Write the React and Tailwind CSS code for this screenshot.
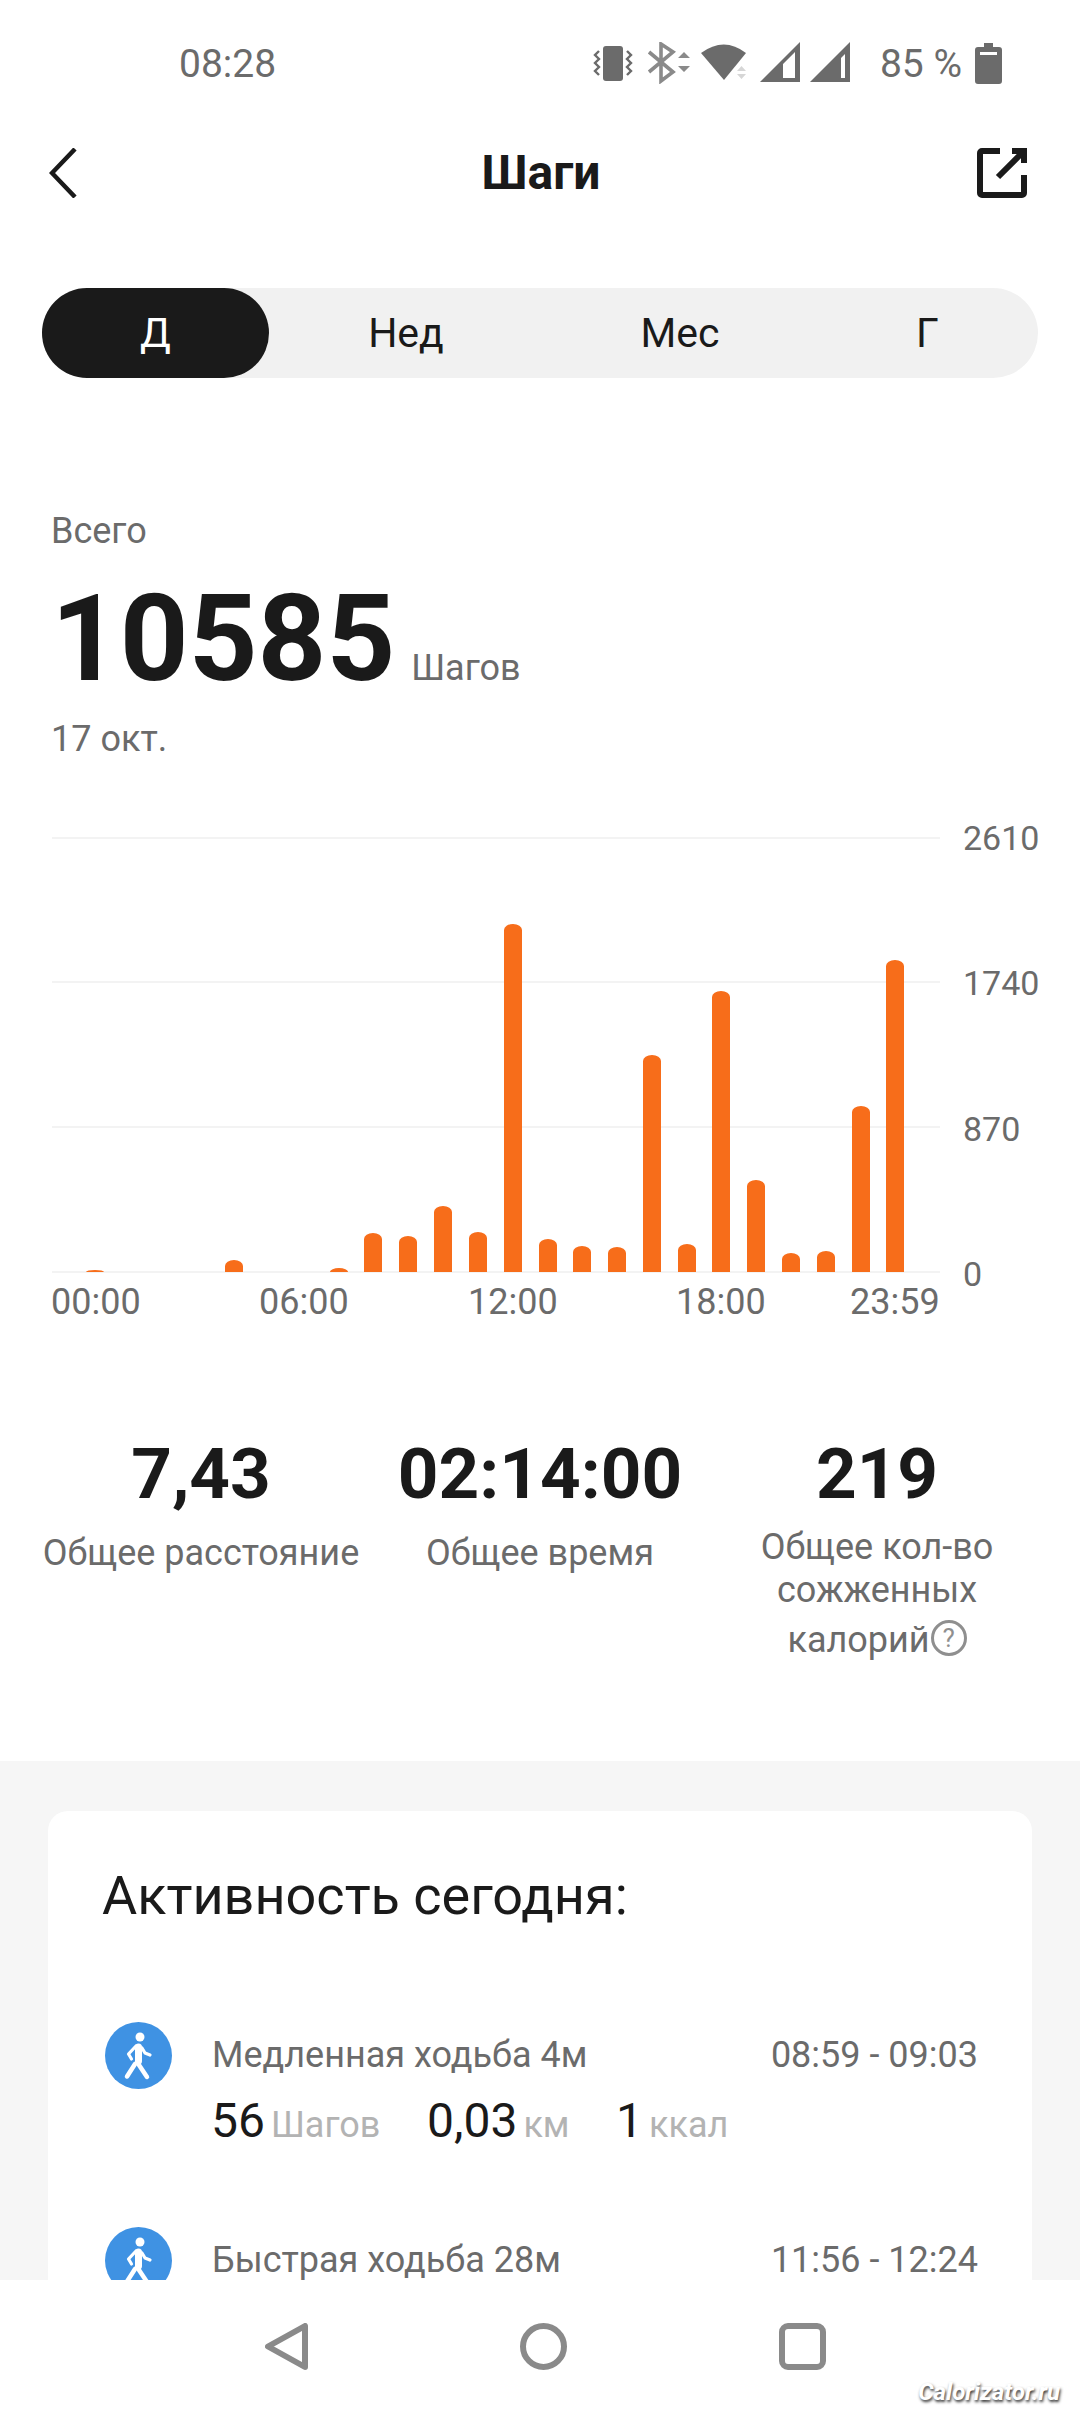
import React from 'react';

const bars = [
  [95, 1270], [234, 1260], [339, 1268], [373, 1233], [408, 1236], [443, 1206], [478, 1232],
  [513, 924], [548, 1239], [582, 1246], [617, 1247], [652, 1055], [687, 1244], [721, 991],
  [756, 1180], [791, 1253], [826, 1251], [861, 1106], [895, 960],
];

const StatusIcons = () => (
  <svg width="257" height="42" viewBox="0 0 257 42" fill="#6b6b6b">
    <rect x="10" y="4" width="20" height="35" rx="3" />
    <path d="M6 9L2 13l4 4-4 4 4 4-4 4 4 4M34 9l4 4-4 4 4 4-4 4 4 4-4 4" fill="none" stroke="#6b6b6b" strokeWidth="2.4" />
    <path d="M56 10l24 20-12 9V2l12 8-24 20" fill="none" stroke="#8a8a8a" strokeWidth="3.6" />
    <path d="M85 16l6-6 6 6zM85 24l6 6 6-6z" fill="#8a8a8a" />
    <path d="M108 11Q131-6 153 11L131 38z" />
    <path d="M144 29l4.500-5 4.500 5zM144 32l4.500 5 4.500-5z" fill="#d6d6d6" />
    <path fillRule="evenodd" d="M167 40L207 0v40zM190 36h12V10l-12 12z" />
    <path fillRule="evenodd" d="M217 40L257 0v40zM248 36h4V12l-4 4z" />
  </svg>
);

const Walker = () => (
  <svg viewBox="0 0 67 67" className="w-[67px] h-[67px] shrink-0" fill="none" stroke="#fff" strokeLinecap="round" strokeLinejoin="round">
    <circle cx="33.500" cy="33.500" r="33.500" fill="#3f92e3" stroke="none" />
    <circle cx="35" cy="15" r="4.500" fill="#fff" stroke="none" />
    <path d="M33.500 25v14" strokeWidth="7" />
    <path d="M32 40l10 15" strokeWidth="4.500" />
    <path d="M30 42l-8 12.500" strokeWidth="4.500" />
    <path d="M31 24l-7.500 8 3 5" strokeWidth="3.200" />
    <path d="M37 26l3 5 5 2" strokeWidth="3.200" />
  </svg>
);

const Stat = ({ value, label, className }) => (
  <div className={`flex flex-col items-center ${className}`}>
    <div className="text-[71px] leading-[90px] font-bold text-[#1a1a1a]">{value}</div>
    <div className="mt-[10px] text-[36px] leading-[48px] text-[#6b6b6b] text-center">{label}</div>
  </div>
);

const Metric = ({ value, unit, className }) => (
  <div className={`flex items-baseline gap-[6px] ${className}`}>
    <span className="text-[48px] leading-[56px] text-[#1a1a1a]">{value}</span>
    <span className="text-[36px] text-[#b3b3b3]">{unit}</span>
  </div>
);

export default function App() {
  return (
    <div className="w-[1080px] h-[2412px] flex flex-col overflow-hidden bg-white font-['Roboto',sans-serif] relative">
      <div className="flex-1 overflow-hidden">
        <div className="h-[126px] pl-[179px] pr-[78px] flex items-center justify-between text-[#6b6b6b]">
          <span className="mt-[2px] text-[39px]">08:28</span>
          <div className="flex items-center">
            <StatusIcons />
            <span className="mt-[2px] ml-[30px] text-[39px]">85 %</span>
            <svg width="27" height="41" viewBox="0 0 27 41" fill="#6b6b6b" className="ml-[13px]">
              <path fillRule="evenodd" d="M9 0h9v4h6a3 3 0 013 3v31a3 3 0 01-3 3H3a3 3 0 01-3-3V7a3 3 0 013-3h6zM5 9v3h17V9z" />
            </svg>
          </div>
        </div>

        <div className="h-[94px] pl-[49px] pr-[53px] grid grid-cols-[1fr_auto_1fr] items-center">
          <svg width="28" height="50" viewBox="0 0 28 50" fill="none" stroke="#1a1a1a" strokeWidth="4.500">
            <path d="M26 1L3 25l23 24" />
          </svg>
          <span className="ml-[6px] text-[48px] font-bold text-[#1a1a1a]">Шаги</span>
          <svg width="50" height="50" viewBox="0 0 50 50" fill="none" stroke="#1a1a1a" strokeWidth="6" className="justify-self-end">
            <path d="M23 3H5a2 2 0 00-2 2v40a2 2 0 002 2h40a2 2 0 002-2V27M21 29L47 3M35 3h12v12" />
          </svg>
        </div>

        <div className="mt-[68px] mx-[42px] h-[90px] rounded-full bg-[#f1f1f1] grid grid-cols-[227px_274px_274px_1fr] text-[41px] text-[#1a1a1a]">
          <div className="pt-[2px] rounded-full bg-[#1a1a1a] text-white flex items-center justify-center">Д</div>
          <div className="pt-[2px] flex items-center justify-center">Нед</div>
          <div className="pt-[2px] flex items-center justify-center">Мес</div>
          <div className="pt-[2px] flex items-center justify-center">Г</div>
        </div>

        <div className="mt-[130px] pl-[51px] pr-[52px]">
          <div className="text-[36px] leading-[46px] text-[#6b6b6b]">Всего</div>
          <div className="flex items-baseline mt-[20px]">
            <span className="text-[120px] leading-[130px] font-bold text-[#1a1a1a]">10585</span>
            <span className="ml-[16px] text-[36px] text-[#6b6b6b]">Шагов</span>
          </div>
          <div className="mt-[12px] text-[36px] leading-[46px] text-[#6b6b6b]">17 окт.</div>
        </div>

        <div className="mt-[75px] pl-[52px] w-full">
          <div className="flex">
            <svg width="888" height="436" viewBox="52 837 888 436" className="block">
              {[838, 982, 1127, 1272].map((y) => (
                <line key={y} x1="52" x2="940" y1={y} y2={y} stroke="#f3f3f3" strokeWidth="2" />
              ))}
              {bars.map(([x, top]) => {
                const ry = Math.min(6, 1272 - top);
                return <path key={x} d={`M${x - 9} 1272V${top + ry}a9 ${ry} 0 0118 0V1272z`} fill="#f76d1a" />;
              })}
            </svg>
            <div className="ml-[23px] h-[476px] -mt-[19px] -mb-[21px] flex flex-col justify-between text-[34px] leading-[40px] text-[#6b6b6b]">
              <span>2610</span>
              <span>1740</span>
              <span>870</span>
              <span>0</span>
            </div>
          </div>
          <div className="mt-[7px] -ml-[1px] flex text-[36px] leading-[44px] text-[#6b6b6b] text-center">
            <span className="w-[88px]">00:00</span>
            <span className="ml-[120px] w-[88px]">06:00</span>
            <span className="ml-[121px] w-[88px]">12:00</span>
            <span className="ml-[120px] w-[88px]">18:00</span>
            <span className="ml-[86px] w-[88px]">23:59</span>
          </div>
        </div>

        <div className="mt-[105px] h-[332px] pl-[42px] flex items-start">
          <Stat value="7,43" label="Общее расстояние" className="w-[318px]" />
          <Stat value="02:14:00" label="Общее время" className="w-[360px]" />
          <div className="w-[314px] flex flex-col items-center">
            <div className="text-[71px] leading-[90px] font-bold text-[#1a1a1a]">219</div>
            <div className="mt-[7px] text-[36px] leading-[43px] text-[#6b6b6b] text-center">
              <div>Общее кол-во</div>
              <div>сожженных</div>
              <div className="mt-[7px] flex items-center justify-center">
                калорий
                <span className="ml-[1px] -mt-[6px] w-[36px] h-[36px] rounded-full border-[3px] border-[#8f8f8f] text-[#8f8f8f] flex items-center justify-center text-[26px] leading-none">?</span>
              </div>
            </div>
          </div>
        </div>

        <div className="bg-[#f6f6f6] pt-[50px] px-[48px] h-[540px]">
          <div className="bg-white rounded-[20px] pl-[57px] pr-[54px] h-[600px]">
            <div className="pt-[54px] -ml-[3px] text-[54px] leading-[62px] text-[#1a1a1a]">Активность сегодня:</div>
            <div className="mt-[95px]">
              <div className="flex items-center">
                <Walker />
                <span className="-mt-[2px] ml-[40px] flex-1 text-[36px] text-[#6b6b6b]">Медленная ходьба 4м</span>
                <span className="-mt-[2px] text-[36px] text-[#6b6b6b]">08:59 - 09:03</span>
              </div>
              <div className="mt-[4px] ml-[106px] flex">
                <Metric value="56" unit="Шагов" className="w-[216px]" />
                <Metric value="0,03" unit="км" className="w-[189px]" />
                <Metric value="1" unit="ккал" />
              </div>
            </div>
            <div className="mt-[75px] flex items-center">
              <Walker />
              <span className="-mt-[2px] ml-[40px] flex-1 text-[36px] text-[#6b6b6b]">Быстрая ходьба 28м</span>
              <span className="-mt-[2px] text-[36px] text-[#6b6b6b]">11:56 - 12:24</span>
            </div>
          </div>
        </div>
      </div>

      <div className="h-[132px] shrink-0 bg-white flex items-center pl-[265px] gap-[212px]">
        <svg width="43" height="47" viewBox="0 0 43 47" fill="none" stroke="#8a8a8a" strokeWidth="6" strokeLinejoin="round">
          <path d="M40 3v41L3 23.500z" />
        </svg>
        <svg width="47" height="47" viewBox="0 0 47 47" fill="none" stroke="#8a8a8a" strokeWidth="6">
          <circle cx="23.500" cy="23.500" r="20.500" />
        </svg>
        <svg width="47" height="47" viewBox="0 0 47 47" fill="none" stroke="#8a8a8a" strokeWidth="6">
          <rect x="3" y="3" width="41" height="41" rx="6" />
        </svg>
      </div>

      <span className="absolute right-[20px] bottom-[8px] text-[24px] leading-none font-bold italic text-white [text-shadow:1px_2px_3px_#333]">Calorizator.ru</span>
    </div>
  );
}
